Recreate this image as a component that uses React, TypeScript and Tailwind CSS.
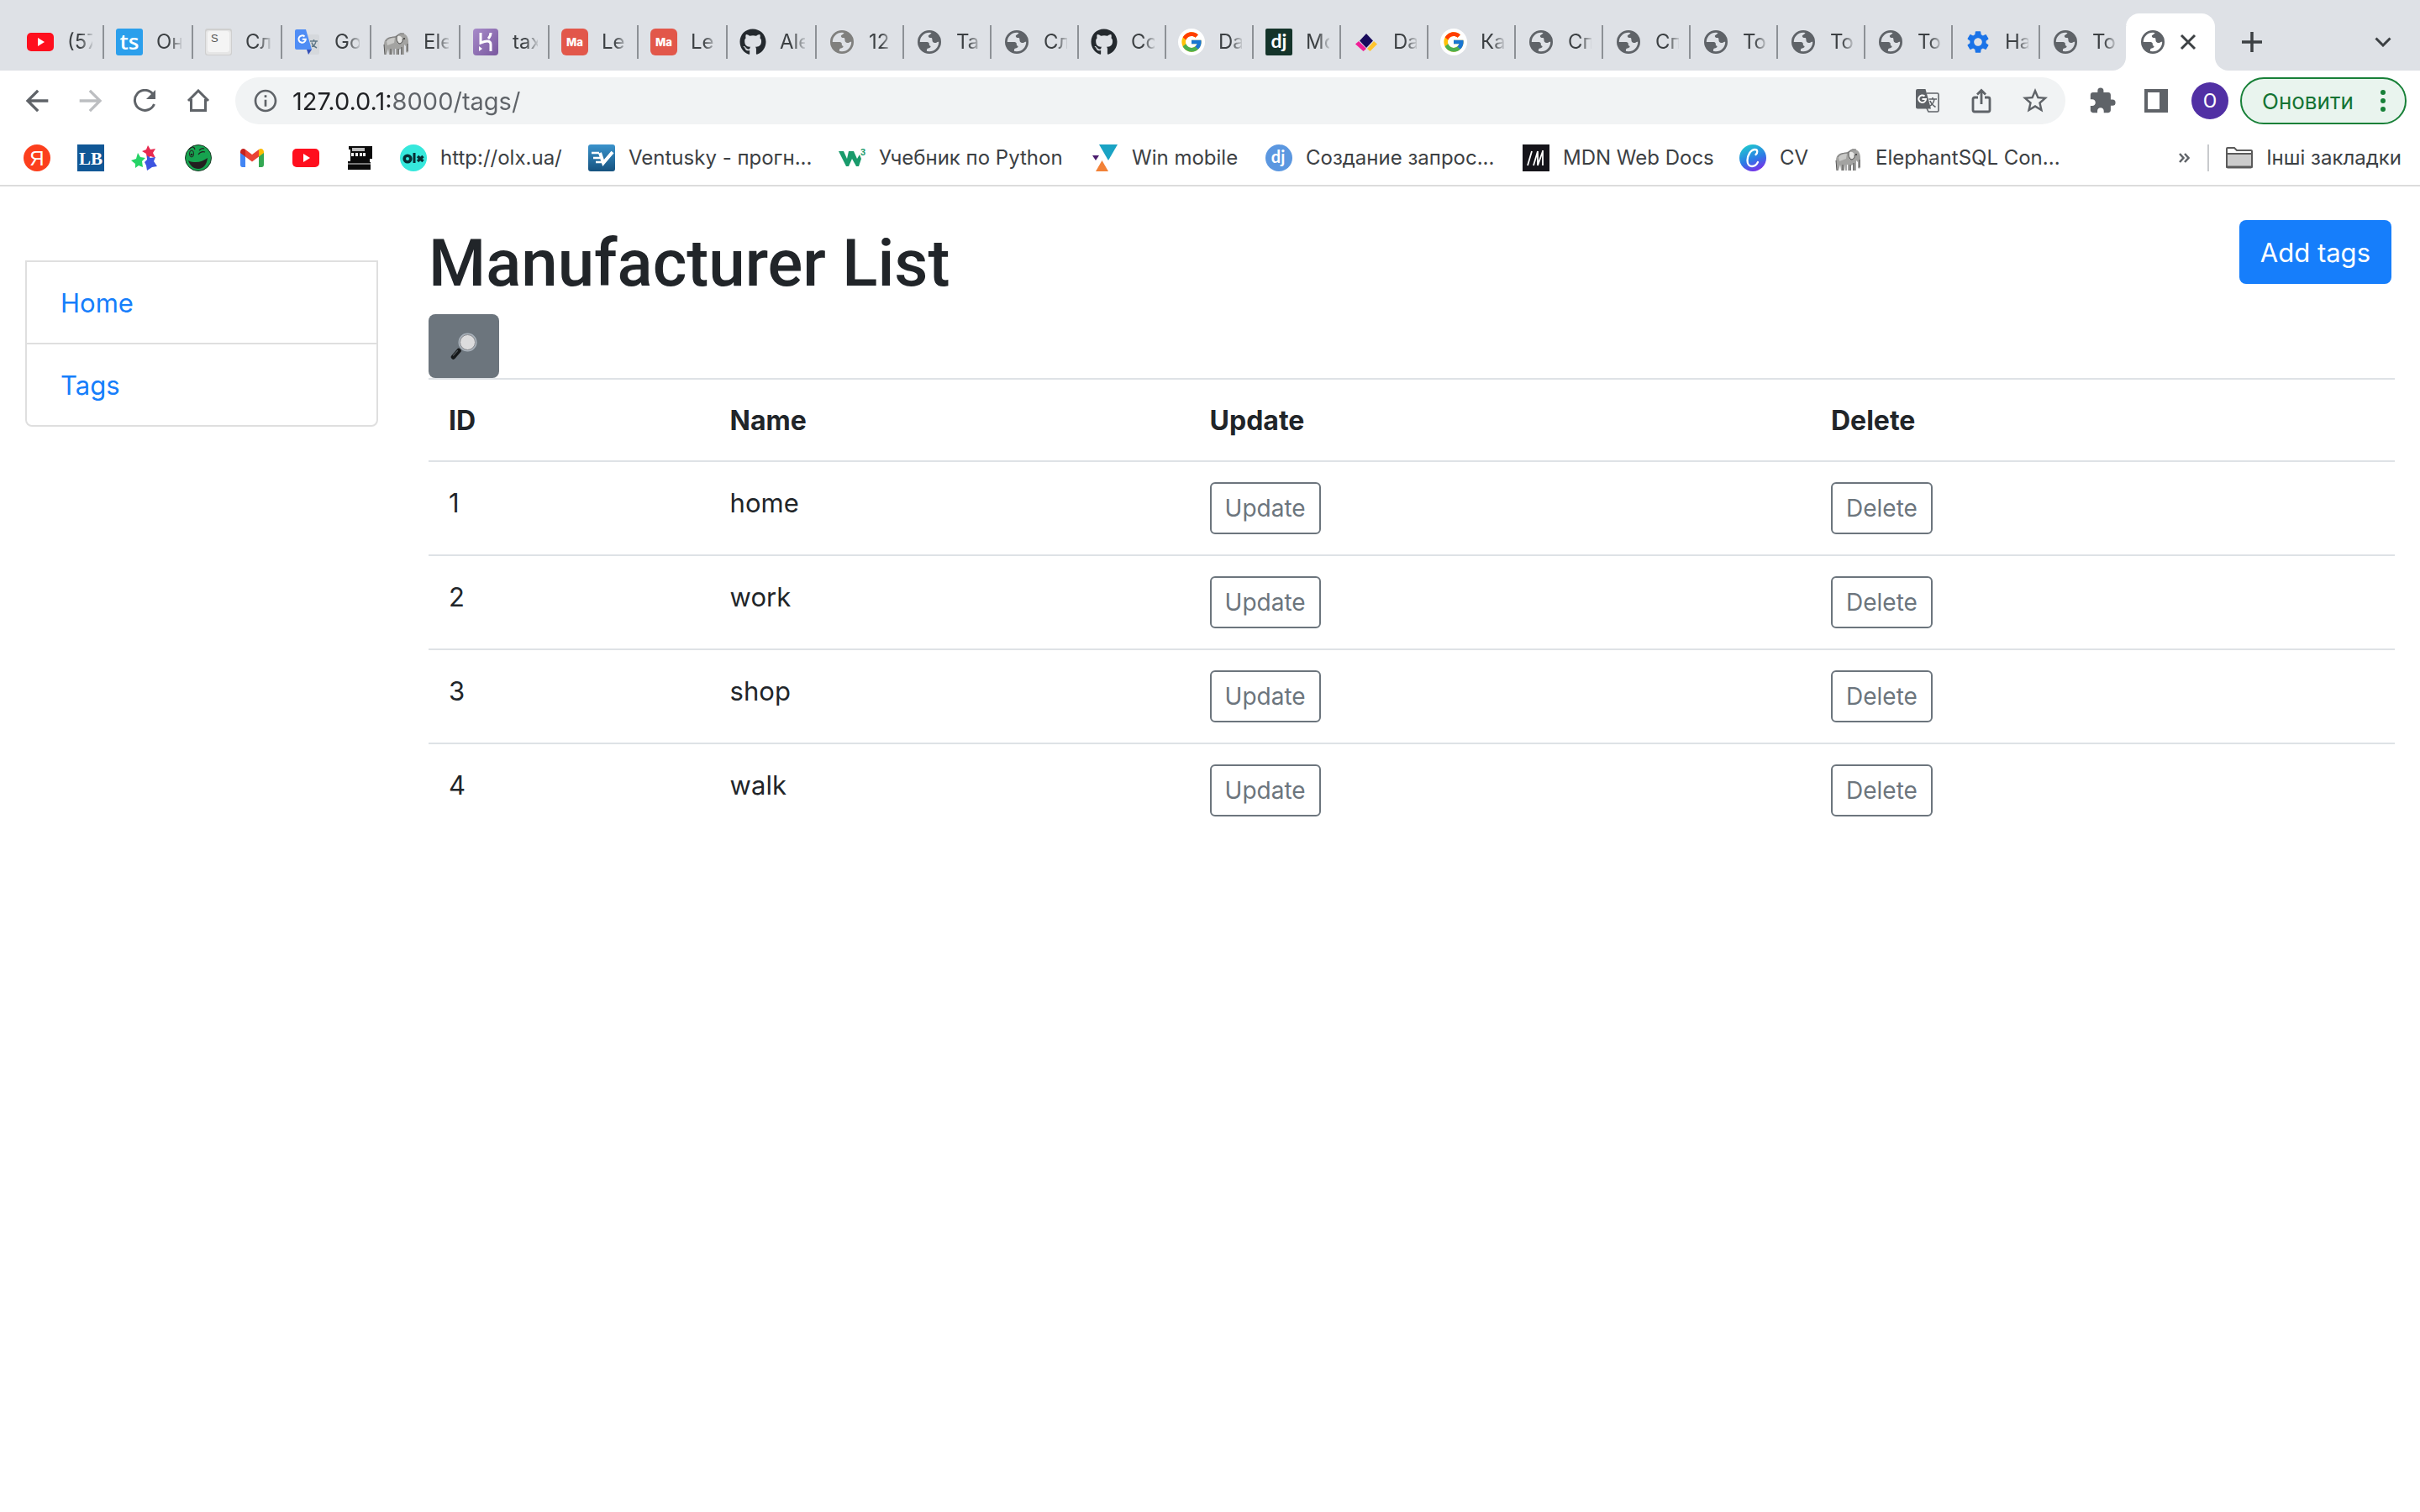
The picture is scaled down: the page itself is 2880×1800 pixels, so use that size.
import React from "react";
import { FaGithub } from "react-icons/fa";
import { FcGoogle } from "react-icons/fc";
import {
  MdArrowBack,
  MdArrowForward,
  MdExtension,
  MdOutlineInfo,
  MdSettings,
  MdStarBorder,
} from "react-icons/md";

/* ---------- site icons ---------- */

const Svg = ({ children, box = "0 0 32 32" }: { children: React.ReactNode; box?: string }) => (
  <svg viewBox={box} className="block h-8 w-8 shrink-0" aria-hidden="true">
    {children}
  </svg>
);

const YouTube = () => (
  <Svg>
    <rect x="0" y="5" width="32" height="22" rx="5" fill="#ff0f1e" />
    <path d="M13 11l8 5-8 5z" fill="#fff" />
  </Svg>
);

const TsIcon = () => (
  <Svg>
    <rect width="32" height="32" rx="3" fill="#2b9fec" />
    <text x="16" y="25" textAnchor="middle" fill="#fff" className="font-['Open_Sans'] text-[26px] font-semibold">
      ts
    </text>
  </Svg>
);

const KeyIcon = () => (
  <Svg>
    <rect width="32" height="32" rx="3" fill="#cfcfcf" />
    <rect x="1" y="2" width="30" height="29" rx="3" fill="#e6e6e6" />
    <rect x="3" y="3" width="26" height="25" rx="3" fill="#f4f4f4" />
    <text x="7" y="16" fill="#555" className="font-['Liberation_Sans'] text-[13px]">
      S
    </text>
  </Svg>
);

const TranslateIcon = () => (
  <Svg>
    <path d="M12 7h16a2 2 0 0 1 2 2v20a2 2 0 0 1-2 2H18z" fill="#d5d8dc" />
    <path d="M19 15h9M23.500 13v2M21 21.500c3-1 4.500-3.500 5-6.500M21 16.500c.6 2.500 3 5 6 6.500" stroke="#607988" strokeWidth="1.500" fill="none" />
    <path d="M15 25h6l-4 6z" fill="#3450b8" />
    <path d="M3 1h11l7 24H3a2 2 0 0 1-2-2V3a2 2 0 0 1 2-2z" fill="#4f8df5" />
    <path d="M12.500 9.500a4.200 4.200 0 1 0 1.300 3.300h-4" stroke="#fff" strokeWidth="2" fill="none" />
  </Svg>
);

const Elephant = () => (
  <Svg>
    <path
      d="M1 19c0-6 4-9 9-9 3 0 4-1 6-2 2-2 5-3 8-2 4 1 6 5 6 10v11c0 2-3 2-3 0v-6l-2-2v12h-4v-7l-2 1v6h-4v-7h-3l-1 7H7l-1-7-2 7H2z"
      fill="#a3a3a1"
    />
    <path d="M4 15c2-3 6-4 10-4l-1 6-8 3z" fill="#c9c9c7" />
    <path d="M17 9c3-1 6 1 6 4s-2 5-4 4-4-5-2-8z" fill="#e6e6e4" />
    <path d="M17 8c-2 3-1 8 2 10 3 0 5-3 4-6M1 19l1 12M9 24v7M13 24v7M18 24v7M22 22v9M29 18v9" stroke="#555" strokeWidth="1" fill="none" />
    <path d="M3 15c3-5 9-5 12-5l5-4h5" stroke="#777" strokeWidth="1" fill="none" />
    <circle cx="25" cy="12" r="1" fill="#333" />
  </Svg>
);

const Heroku = () => (
  <Svg>
    <defs>
      <linearGradient id="heroku" x1="0" y1="0" x2="1" y2="1">
        <stop offset="0" stopColor="#a78bc9" />
        <stop offset="1" stopColor="#79589f" />
      </linearGradient>
    </defs>
    <rect x="1" y="0" width="30" height="32" rx="4" fill="url(#heroku)" />
    <path d="M10 5v12c5-2 12-4 12 2v8M22 5c0 3-1 5-3 7" stroke="#fff" strokeWidth="3" fill="none" />
    <path d="M8 21l4 3-4 3z" fill="#fff" />
  </Svg>
);

const Mate = () => (
  <Svg>
    <rect width="32" height="32" rx="6" fill="#e2574a" />
    <text x="16" y="21" textAnchor="middle" fill="#fff" className="font-['Inter'] text-[13px] font-extrabold">
      Ma
    </text>
  </Svg>
);

const GitHub = () => <FaGithub className="h-8 w-8 shrink-0 text-[#24292e]" aria-hidden="true" />;

const Globe = ({ tone = "#5f6368" }: { tone?: string }) => (
  <Svg>
    <g transform="translate(2 2)">
      <circle cx="14" cy="14" r="12.600" fill="none" stroke={tone} strokeWidth="2.800" />
      <path
        d="M17 1.500C16.500 4 15.500 4.500 14 5.500c-2 1.200-1 2-.6 2.800.6 1 2 .6 3 .8 1.600.4.600 3.200 1.600 4.600 1.200 1.600 3.600 1.800 4.800.7 1-1 2-.6 4-.9A13 13 0 0 0 17 1.500z"
        fill={tone}
      />
      <path
        d="M1 14h10.500c2.200.2 2.600 2 2.300 3.600.1 1.200 1.600.6 1.800 2-.1 1.400-1.700 1.600-3 1.900-2 .4-1.600 2.500-1.600 4.300C5 24.500 1 20 1 14z"
        fill={tone}
      />
    </g>
  </Svg>
);

const Google = () => (
  <span className="flex h-8 w-8 shrink-0 items-center justify-center rounded-full bg-white">
    <FcGoogle className="h-7 w-7" aria-hidden="true" />
  </span>
);

const Django = () => (
  <Svg>
    <rect width="32" height="32" rx="2" fill="#14342a" />
    <text x="16" y="23" textAnchor="middle" fill="#fff" className="font-['Lato'] text-[23px] font-bold">
      dj
    </text>
  </Svg>
);

const Diamonds = () => (
  <Svg>
    <path d="M16 6l8 8.500L16 23l-8-8.500z" fill="#180a5c" />
    <path d="M7 15l9 9-3.500 3L3 18.500z" fill="#f01e96" />
    <path d="M25 15l4 3.500-8.500 8.500-3.500-3z" fill="#ffc42e" />
  </Svg>
);

const Gear = () => <MdSettings className="h-8 w-8 shrink-0 text-[#1a73e8]" aria-hidden="true" />;

const Yandex = () => (
  <Svg>
    <circle cx="16" cy="16" r="16" fill="#fc3f1d" />
    <text x="16" y="25" textAnchor="middle" fill="#fff" className="font-['Liberation_Sans'] text-[24px]">
      Я
    </text>
  </Svg>
);

const LbIcon = () => (
  <Svg>
    <rect width="32" height="32" fill="#105796" />
    <text x="16" y="24" textAnchor="middle" fill="#fff" className="font-['Liberation_Serif'] text-[21px] font-bold">
      LB
    </text>
  </Svg>
);

const Stars = () => (
  <Svg>
    <path d="M20 1l3 5 6-1-3 5 3 6-6-2-4 3-1-6-5-3 5-2z" fill="#e8294f" />
    <path d="M8 10l3 5 6 1-4 4 1 7-5-2-4 3v-5l-5-4 6-2z" fill="#25d366" />
    <path d="M19 13l4 3 6-1-2 5 4 6-6 1-6 4-1-6-2-4 3-3z" fill="#3d54e0" />
  </Svg>
);

const Smiley = () => (
  <Svg>
    <circle cx="16" cy="16" r="15.500" fill="#16a34f" stroke="#1d3b28" strokeWidth="1" />
    <path d="M4 19c3 2 6 2 9 2 5 0 10-2 14-5-1 8-5 13-11 13S6 25 4 19z" fill="#231f20" />
    <ellipse cx="8" cy="11" rx="2.500" ry="4" fill="none" stroke="#231f20" strokeWidth="1" />
    <circle cx="8" cy="12" r="1.300" fill="#231f20" />
    <path d="M16 12c2-3 5-4 8-3M17 7c2-2 4-3 6-2M5 6c3-4 6-4 7 0" stroke="#231f20" strokeWidth="1.200" fill="none" />
  </Svg>
);

const Gmail = () => (
  <Svg>
    <path d="M2 9v15c0 2 1 3 2.500 3H8V12z" fill="#4285f4" />
    <path d="M30 9v15c0 2-1 3-2.500 3H24V12z" fill="#34a853" />
    <path d="M2 9c0-4 4-5 6-3v8.500L2 10z" fill="#c5221f" />
    <path d="M30 9c0-4-4-5-6-3v8.500l6-4.500z" fill="#fbbc04" />
    <path d="M8 6l8 6 8-6v8.500l-8 6-8-6z" fill="#ea4335" />
  </Svg>
);

const CashRegister = () => (
  <Svg>
    <path d="M3 2h28v15h-3v4h1v9H2V20h3V6H3z" fill="#0a0a0a" />
    <rect x="7" y="4" width="15" height="4" fill="#bdbdbd" />
    <path d="M6 10h3v4H6zM11 10h3v4h-3zM16 10h3v4h-3zM20 10h3v4h-3z" fill="#f5f5f5" />
    <rect x="2" y="22" width="27" height="2" fill="#777" />
  </Svg>
);

const Olx = () => (
  <Svg>
    <circle cx="16" cy="16" r="16" fill="#36e8dc" />
    <circle cx="9" cy="17" r="3.800" fill="none" stroke="#062f34" strokeWidth="3.600" />
    <path d="M17 10v12" stroke="#062f34" strokeWidth="3" />
    <path d="M21 14l6.500 6M27.500 14L21 20" stroke="#062f34" strokeWidth="3.400" />
  </Svg>
);

const Ventusky = () => (
  <Svg>
    <defs>
      <linearGradient id="ventusky" x1="0" y1="0" x2="0" y2="1">
        <stop offset="0" stopColor="#3a93cc" />
        <stop offset="1" stopColor="#16527f" />
      </linearGradient>
    </defs>
    <rect width="32" height="32" rx="3" fill="url(#ventusky)" />
    <path d="M4 10h9M6 16h8M9 21h8" stroke="#fff" strokeWidth="2.500" />
    <path d="M14 10l4 12 11-13" stroke="#fff" strokeWidth="4" fill="none" />
  </Svg>
);

const W3 = () => (
  <Svg>
    <path d="M0 8h6l4 9 2-9h6l4 9 3-5 2 5-3 9h-3l-5-9-4 9H9z" fill="#1a9b6c" />
    <text x="26" y="13" fill="#1a9b6c" className="font-['Liberation_Sans'] text-[11px] font-bold">
      3
    </text>
  </Svg>
);

const Triangles = () => (
  <Svg>
    <path d="M9 0h22L20 19z" fill="#1aa3c4" />
    <path d="M1 13h8l-4 6z" fill="#4b1d6e" />
    <path d="M12.500 19l7.500 13H5z" fill="#f28137" />
  </Svg>
);

const DjangoBlue = () => (
  <Svg>
    <circle cx="16" cy="16" r="16" fill="#5b97e0" />
    <text x="15" y="22" textAnchor="middle" fill="#fff" className="font-['Lato'] text-[20px] font-bold">
      dj
    </text>
  </Svg>
);

const Mdn = () => (
  <Svg>
    <rect width="32" height="32" fill="#15141a" />
    <path d="M6 25l5-17M13 25l5-17M18 8v17M18 25l6-17M24 7v18" stroke="#fff" strokeWidth="1.800" fill="none" />
  </Svg>
);

const Canva = () => (
  <Svg>
    <defs>
      <linearGradient id="canva" x1="0.300" y1="0" x2="0.700" y2="1">
        <stop offset="0" stopColor="#1fc8cf" />
        <stop offset="0.550" stopColor="#2d7be6" />
        <stop offset="1" stopColor="#7d2ae8" />
      </linearGradient>
    </defs>
    <circle cx="16" cy="16" r="16" fill="url(#canva)" />
    <path d="M19.500 12c2.500-2 2.500-6-1-6-5 0-9 7-9 13 0 4 2 7 5.500 7 3 0 5.500-2 7-5" stroke="#fff" strokeWidth="2.300" fill="none" strokeLinecap="round" />
  </Svg>
);

/* ---------- browser chrome ---------- */

type TabInfo = { icon: React.ReactNode; title: string };

const wideTabs: TabInfo[] = [
  { icon: <YouTube />, title: "(57" },
  { icon: <TsIcon />, title: "Он" },
  { icon: <KeyIcon />, title: "Сл" },
  { icon: <TranslateIcon />, title: "Go" },
  { icon: <Elephant />, title: "Ele" },
  { icon: <Heroku />, title: "tax" },
  { icon: <Mate />, title: "Le" },
  { icon: <Mate />, title: "Le" },
  { icon: <GitHub />, title: "Ale" },
];

const narrowTabs: TabInfo[] = [
  { icon: <Globe tone="#80807e" />, title: "12" },
  { icon: <Globe />, title: "Ta" },
  { icon: <Globe />, title: "Сл" },
  { icon: <GitHub />, title: "Co" },
  { icon: <Google />, title: "Da" },
  { icon: <Django />, title: "Mo" },
  { icon: <Diamonds />, title: "Da" },
  { icon: <Google />, title: "Ка" },
  { icon: <Globe />, title: "Сп" },
  { icon: <Globe />, title: "Сп" },
  { icon: <Globe />, title: "To" },
  { icon: <Globe />, title: "To" },
  { icon: <Globe />, title: "To" },
  { icon: <Gear />, title: "На" },
  { icon: <Globe />, title: "To" },
];

function Tab({ icon, title, width }: TabInfo & { width: string }) {
  return (
    <button type="button" className={`flex h-[68px] shrink-0 items-center pl-3.5 ${width}`}>
      {icon}
      <span className="ml-4 mr-3 min-w-0 flex-1 overflow-hidden whitespace-nowrap text-left [mask-image:linear-gradient(to_right,black_50%,rgba(0,0,0,0.15))]">
        {title}
      </span>
      <span className="h-10 w-0.5 bg-[#8d9196]" />
    </button>
  );
}

function TabStrip() {
  return (
    <div className="flex h-[84px] items-end bg-[#dee1e6] pl-[18px] text-2xl text-[#3c4043]">
      {wideTabs.map((t, i) => (
        <Tab key={i} {...t} width="w-[106px]" />
      ))}
      {narrowTabs.map((t, i) => (
        <Tab key={i} {...t} width="w-[104px]" />
      ))}
      <div className="relative -ml-0.5 flex h-[68px] w-[106px] shrink-0 items-center rounded-t-2xl bg-white pl-4">
        <svg viewBox="0 0 16 16" className="absolute -left-4 bottom-0 h-4 w-4" aria-hidden="true">
          <path d="M16 0v16H0A16 16 0 0 0 16 0z" fill="#fff" />
        </svg>
        <svg viewBox="0 0 16 16" className="absolute -right-4 bottom-0 h-4 w-4" aria-hidden="true">
          <path d="M0 0v16h16A16 16 0 0 1 0 0z" fill="#fff" />
        </svg>
        <Globe />
        <button type="button" aria-label="Close tab" className="ml-4 flex h-5 w-5 items-center justify-center">
          <svg viewBox="0 0 20 20" className="h-5 w-5" aria-hidden="true">
            <path d="M2 2l16 16M18 2L2 18" stroke="#3c4043" strokeWidth="3" />
          </svg>
        </button>
      </div>
      <button type="button" aria-label="New tab" className="ml-8 flex h-[68px] w-6 items-center">
        <svg viewBox="0 0 24 24" className="h-6 w-6" aria-hidden="true">
          <path d="M12 0v24M0 12h24" stroke="#3c4043" strokeWidth="3.500" />
        </svg>
      </button>
      <button type="button" aria-label="Search tabs" className="ml-auto mr-[34px] flex h-[68px] w-5 items-center">
        <svg viewBox="0 0 20 12" className="h-3 w-5" aria-hidden="true">
          <path d="M1.500 1.500L10 10l8.500-8.500" stroke="#3c4043" strokeWidth="3" fill="none" />
        </svg>
      </button>
    </div>
  );
}

function BarButton({ label, children }: { label: string; children: React.ReactNode }) {
  return (
    <button type="button" aria-label={label} className="flex h-14 w-16 shrink-0 items-center justify-center text-[#5f6368]">
      {children}
    </button>
  );
}

function Toolbar() {
  return (
    <div className="flex h-[72px] items-center bg-white pl-3 pr-4">
      <BarButton label="Back">
        <MdArrowBack className="h-10 w-10" />
      </BarButton>
      <BarButton label="Forward">
        <MdArrowForward className="h-10 w-10 text-[#bcbec1]" />
      </BarButton>
      <BarButton label="Reload">
        <svg viewBox="0 0 28 28" className="h-7 w-7" aria-hidden="true">
          <path d="M23.500 5.500A12 12 0 1 0 25.500 18" stroke="currentColor" strokeWidth="3" fill="none" />
          <path d="M27 1v11H16z" fill="currentColor" />
        </svg>
      </BarButton>
      <BarButton label="Home">
        <svg viewBox="0 0 28 28" className="h-7 w-7" aria-hidden="true">
          <path d="M2 14L14 2l12 12M5.500 12v13.500h17V12" stroke="currentColor" strokeWidth="3" fill="none" />
        </svg>
      </BarButton>
      <div className="ml-3 flex h-14 min-w-0 flex-1 items-center rounded-full bg-[#f1f3f4] pl-5 pr-1">
        <MdOutlineInfo className="h-8 w-8 shrink-0 text-[#5f6368]" />
        <input
          aria-label="Address"
          defaultValue="127.0.0.1:8000/tags/"
          className="ml-4 h-14 min-w-0 flex-1 bg-[linear-gradient(to_right,#202124_118px,#5f6368_118px)] bg-clip-text text-[29px] text-transparent outline-none"
        />
        <BarButton label="Translate this page">
          <svg viewBox="0 0 28 28" className="h-7 w-7" aria-hidden="true">
            <path d="M13 5h12.500a1.500 1.500 0 0 1 1.500 1.500v19a1.500 1.500 0 0 1-1.500 1.500H15l-2-4" stroke="currentColor" strokeWidth="1.600" fill="none" />
            <path d="M15.500 12H25M20 10v2M15 21c4-1.500 6.500-5 7-9M17 14c1 3 3.500 5.500 6.500 7.500" stroke="currentColor" strokeWidth="1.600" fill="none" />
            <path d="M2 0h9.500l6.500 23.500H2a2 2 0 0 1-2-2V2a2 2 0 0 1 2-2z" fill="currentColor" />
            <path d="M10.500 8.500a4.300 4.300 0 1 0 1.500 3.500H7.500" stroke="#fff" strokeWidth="2" fill="none" />
          </svg>
        </BarButton>
        <BarButton label="Share">
          <svg viewBox="0 0 24 30" className="h-[30px] w-6" aria-hidden="true">
            <path d="M8 11H4a2 2 0 0 0-2 2v13a2 2 0 0 0 2 2h16a2 2 0 0 0 2-2V13a2 2 0 0 0-2-2h-4M12 19V3M7 7.500L12 2.500l5 5" stroke="currentColor" strokeWidth="2.800" fill="none" />
          </svg>
        </BarButton>
        <BarButton label="Bookmark this page">
          <MdStarBorder className="h-9 w-9" />
        </BarButton>
      </div>
      <div className="ml-3 flex items-center">
        <BarButton label="Extensions">
          <MdExtension className="h-[34px] w-[34px]" />
        </BarButton>
        <BarButton label="Side panel">
          <svg viewBox="0 0 28 28" className="h-7 w-7" aria-hidden="true">
            <path d="M0 0h28v28H0zM4 4v20h14V4z" fill="currentColor" fillRule="evenodd" />
          </svg>
        </BarButton>
        <BarButton label="Profile">
          <span className="flex h-11 w-11 items-center justify-center rounded-full bg-[#5130a4] font-[Roboto] text-2xl text-white">
            O
          </span>
        </BarButton>
      </div>
      <button
        type="button"
        className="ml-1 flex h-14 w-[198px] shrink-0 items-center justify-between rounded-full border-2 border-[#188038] bg-[#e9f4ee] pl-6 pr-[23px] text-[26px] text-[#137333]"
      >
        Оновити
        <svg viewBox="0 0 6 28" className="h-7 w-1.5" aria-hidden="true">
          <circle cx="3" cy="4" r="3" fill="#188038" />
          <circle cx="3" cy="14" r="3" fill="#188038" />
          <circle cx="3" cy="24" r="3" fill="#188038" />
        </svg>
      </button>
    </div>
  );
}

const iconBookmarks = [
  { name: "Yandex", icon: <Yandex /> },
  { name: "LB", icon: <LbIcon /> },
  { name: "Stars", icon: <Stars /> },
  { name: "Smiley", icon: <Smiley /> },
  { name: "Gmail", icon: <Gmail /> },
  { name: "YouTube", icon: <YouTube /> },
  { name: "Cash register", icon: <CashRegister /> },
];

const bookmarks = [
  { icon: <Olx />, label: "http://olx.ua/", width: "w-36" },
  { icon: <Ventusky />, label: "Ventusky - прогн...", width: "w-[218px]" },
  { icon: <W3 />, label: "Учебник по Python", width: "w-[221px]" },
  { icon: <Triangles />, label: "Win mobile", width: "w-[127px]" },
  { icon: <DjangoBlue />, label: "Создание запрос...", width: "w-[226px]" },
  { icon: <Mdn />, label: "MDN Web Docs", width: "w-[178px]" },
  { icon: <Canva />, label: "CV", width: "w-[34px]" },
  { icon: <Elephant />, label: "ElephantSQL Con...", width: "w-[220px]" },
];

function BookmarkBar() {
  return (
    <nav aria-label="Bookmarks" className="flex h-[66px] items-center gap-8 border-b-2 border-[#dcdcdc] bg-white pl-7 pr-[22px] text-2xl text-[#3c4043]">
      {iconBookmarks.map((b) => (
        <a key={b.name} href="#" aria-label={b.name}>
          {b.icon}
        </a>
      ))}
      {bookmarks.map((b) => (
        <a key={b.label} href="#" className="flex shrink-0 items-center gap-4 whitespace-nowrap">
          {b.icon}
          <span className={b.width}>{b.label}</span>
        </a>
      ))}
      <div className="ml-auto flex items-center">
        <button type="button" aria-label="More bookmarks" className="mr-[21px]">
          <svg viewBox="0 0 14 14" className="h-3.5 w-3.5" aria-hidden="true">
            <path d="M2 2l4.500 5L2 12M8 2l4.500 5L8 12" stroke="#5f6368" strokeWidth="2.500" fill="none" />
          </svg>
        </button>
        <span className="mr-5 h-8 w-0.5 bg-[#c8cacd]" />
        <a href="#" className="flex items-center gap-4 whitespace-nowrap">
          <Svg>
            <path d="M1 25V5a1 1 0 0 1 1-1h8l3 3h17a1 1 0 0 1 1 1v18a1.500 1.500 0 0 1-1.500 1.500h-27A1.500 1.500 0 0 1 1 26z" fill="#fff" stroke="#5a5a5a" strokeWidth="2" />
            <path d="M1 11h30v15.500H1z" fill="#cccccc" stroke="#5a5a5a" strokeWidth="2" />
          </Svg>
          <span>Інші закладки</span>
        </a>
      </div>
    </nav>
  );
}

/* ---------- page ---------- */

const tags = ["home", "work", "shop", "walk"];

const outlineButton = "block rounded-md border-2 border-[#6c757d] px-4 text-[28px] leading-[42px] text-[#6c757d] py-2";

function Sidebar() {
  return (
    <aside className="w-1/6 shrink-0 px-[30px] pt-12">
      <nav aria-label="Sections">
        <ul className="divide-y-2 divide-[#dfdfdf] rounded-b-lg border-2 border-[#dfdfdf]">
          {["Home", "Tags"].map((item) => (
            <li key={item} className="px-10 pb-[23px] pt-[25px]">
              <a href="#" className="text-[#167efb]">
                {item}
              </a>
            </li>
          ))}
        </ul>
      </nav>
    </aside>
  );
}

function TagTable() {
  return (
    <table className="w-full table-fixed border-collapse text-left">
      <colgroup>
        <col className="w-[14.3%]" />
        <col className="w-[24.4%]" />
        <col className="w-[31.6%]" />
        <col className="w-[29.7%]" />
      </colgroup>
      <thead>
        <tr className="border-t-2 border-[#dee2e6]">
          {["ID", "Name", "Update", "Delete"].map((h) => (
            <th key={h} scope="col" className="px-6 pb-[23px] pt-[25px] text-[32px] font-bold leading-[48px]">
              {h}
            </th>
          ))}
        </tr>
      </thead>
      <tbody>
        {tags.map((name, i) => (
          <tr key={name} className="border-t-2 border-[#dee2e6] align-top">
            <td className="px-6 pt-[25px]">{i + 1}</td>
            <td className="px-6 pt-[25px]">{name}</td>
            <td className="p-6">
              <button type="button" className={outlineButton}>
                Update
              </button>
            </td>
            <td className="p-6">
              <button type="button" className={outlineButton}>
                Delete
              </button>
            </td>
          </tr>
        ))}
      </tbody>
    </table>
  );
}

export default function App() {
  return (
    <div className="min-h-screen bg-white font-['Inter',sans-serif]">
      <header>
        <TabStrip />
        <Toolbar />
        <BookmarkBar />
      </header>
      <div className="flex pt-10 text-[31px] leading-[48px] text-[#212529]">
        <Sidebar />
        <main className="min-w-0 flex-1 px-[30px]">
          <div className="mb-4 flex items-start justify-between pr-1">
            <h1 className="pt-2 font-[Roboto] text-[78px] font-medium leading-[88px]">Manufacturer List</h1>
            <button type="button" className="rounded-lg bg-[#167efb] px-[25px] pb-[13px] pt-[15px] text-white">
              Add tags
            </button>
          </div>
          <button type="button" aria-label="Search" className="flex h-[76px] w-[84px] items-center justify-center rounded-lg bg-[#6c757d]">
            <svg viewBox="0 0 32 32" className="h-8 w-8" aria-hidden="true">
              <path d="M12 20l-2.500 2.500" stroke="#8a8d90" strokeWidth="2.500" />
              <path d="M10 21.500L3.500 29" stroke="#15181a" strokeWidth="5.500" strokeLinecap="round" />
              <path d="M8.500 21.500L3.500 27" stroke="#50565a" strokeWidth="1.200" strokeLinecap="round" />
              <circle cx="20.500" cy="11.500" r="10" fill="#dcdcdd" stroke="#a9b2bb" strokeWidth="2" />
              <circle cx="20.500" cy="11.500" r="9" fill="none" stroke="#77797c" strokeWidth="0.800" />
            </svg>
          </button>
          <TagTable />
        </main>
      </div>
    </div>
  );
}
